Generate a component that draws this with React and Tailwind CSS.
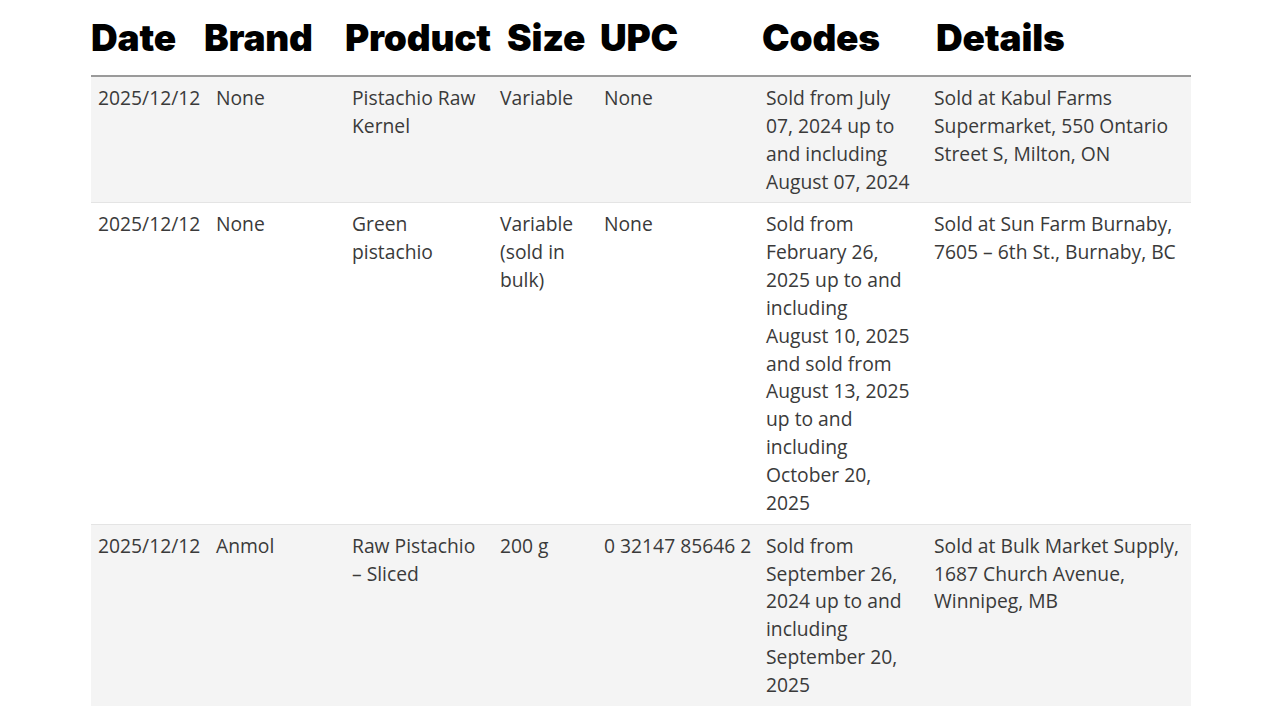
const rows = [
  {
    date: "2025/12/12",
    brand: "None",
    product: "Pistachio Raw Kernel",
    size: "Variable",
    upc: "None",
    codes: "Sold from July 07, 2024 up to and including August 07, 2024",
    details: "Sold at Kabul Farms Supermarket, 550 Ontario Street S, Milton, ON",
  },
  {
    date: "2025/12/12",
    brand: "None",
    product: "Green pistachio",
    size: "Variable (sold in bulk)",
    upc: "None",
    codes:
      "Sold from February 26, 2025 up to and including August 10, 2025 and sold from August 13, 2025 up to and including October 20, 2025",
    details: "Sold at Sun Farm Burnaby, 7605 – 6th St., Burnaby, BC",
  },
  {
    date: "2025/12/12",
    brand: "Anmol",
    product: "Raw Pistachio – Sliced",
    size: "200 g",
    upc: "0 32147 85646 2",
    codes: "Sold from September 26, 2024 up to and including September 20, 2025",
    details: "Sold at Bulk Market Supply, 1687 Church Avenue, Winnipeg, MB",
  },
];

const cols = ["w-[117px]", "w-[136px]", "w-[148px]", "w-[104px]", "w-[162px]", "w-[168px]", "w-[265px]"];

export default function App() {
  return (
    <div className="min-h-[725px] bg-white pl-[91px] pr-[89px]">
      {/* Heading row */}
      <div className="flex h-[75px] items-center pt-[1px] font-['Inter',sans-serif] text-[37px] font-black tracking-[-0.2px] text-black">
        <span className="w-[113px]">Date</span>
        <span className="w-[141px]">Brand</span>
        <span className="w-[162px]">Product</span>
        <span className="w-[93px]">Size</span>
        <span className="w-[162px]">UPC</span>
        <span className="w-[174px]">Codes</span>
        <span>Details</span>
      </div>

      <table className="w-[1100px] table-fixed border-collapse border-t-2 border-[#9a9a9a] font-['Open_Sans',sans-serif] text-[19.3px] leading-[27.85px] text-[#3a3a3a]">
        <colgroup>
          {cols.map((c, i) => (
            <col key={i} className={c} />
          ))}
        </colgroup>
        <tbody>
          {rows.map((r, i) => (
            <tr key={i} className={`${i % 2 === 0 ? "bg-[#f4f4f4]" : "bg-white"} border-t border-[#e4e4e4] align-top`}>
              {[r.date, r.brand, r.product, r.size, r.upc, r.codes, r.details].map((v, j) => (
                <td
                  key={j}
                  className={`py-[7px] ${j === 0 ? "pl-[7px]" : "pl-[8px]"} ${j === 5 ? "pr-[14px]" : "pr-[6px]"}`}
                >
                  {v}
                </td>
              ))}
            </tr>
          ))}
        </tbody>
      </table>
    </div>
  );
}
